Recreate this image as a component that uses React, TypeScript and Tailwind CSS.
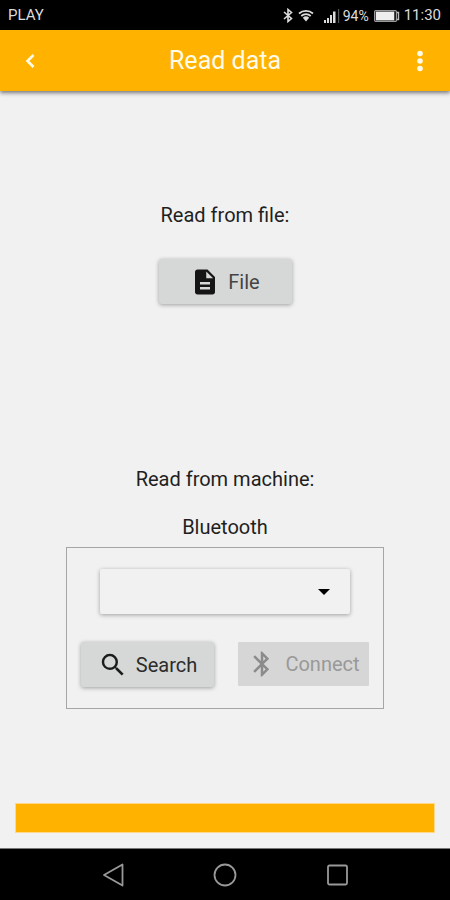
import React from "react";

function StatusBar() {
  return (
    <div className="flex h-[30px] items-center justify-between bg-black pt-px pr-[9px] pl-2 text-[15px] text-[#dcdcdc]">
      <span>PLAY</span>
      <div className="flex items-center">
        <svg className="h-[15px] w-[10px]" viewBox="0 0 10 15" fill="none" stroke="currentColor" strokeWidth="1.6">
          <path d="M1 4l7.5 6.5L5 13.5v-12l3.5 3L1 11" />
        </svg>
        <svg className="ml-[5px] h-[13px] w-4" viewBox="0 0 16 13" fill="none" stroke="currentColor" strokeWidth="1.7">
          <path d="M1 4.5a10.5 10.5 0 0 1 14 0M3.3 7a7 7 0 0 1 9.4 0" />
          <path d="M4.800 8.800a4.800 4.800 0 0 1 6.400 0L8 12.500z" fill="currentColor" stroke="none" />
        </svg>
        <svg className="ml-[10px] h-[14px] w-4" viewBox="0 0 16 14" fill="currentColor">
          <path d="M0 11h2v3H0zM3 9h2v5H3zM6 6h2v8H6zM9 2.500h2.500v11.500H9z" />
          <path d="M14 0h1.200v14H14z" opacity=".4" />
        </svg>
        <span className="ml-[3px] text-sm">94%</span>
        <svg className="ml-[5px] h-3 w-[26px]" viewBox="0 0 26 12">
          <rect x=".6" y=".6" width="21.800" height="10.800" rx="1" fill="none" stroke="#999" strokeWidth="1.200" />
          <rect x="1.800" y="1.600" width="18.500" height="8.800" fill="#eee" />
          <path d="M23 2.500h1.500v7H23" fill="none" stroke="#bbb" strokeWidth="1.400" />
        </svg>
        <span className="ml-1">11:30</span>
      </div>
    </div>
  );
}

function AppBar() {
  return (
    <header className="flex h-[61px] items-center justify-between bg-[#ffb300] text-[#fffbea] shadow-[0_2px_4px_rgba(0,0,0,0.5)]">
      <button type="button" aria-label="Back" className="flex h-full w-[60px] items-center justify-center">
        <svg className="h-4 w-3" viewBox="0 0 12 16" fill="none" stroke="currentColor" strokeWidth="2.600">
          <path d="M9.500 2l-6 6 6 6" />
        </svg>
      </button>
      <h1 className="text-[25px]">Read data</h1>
      <button type="button" aria-label="More options" className="flex h-full w-[60px] items-center justify-center">
        <svg className="h-[22px] w-2" viewBox="0 0 8 22" fill="currentColor">
          <circle cx="4" cy="3.500" r="2.800" />
          <circle cx="4" cy="11" r="2.800" />
          <circle cx="4" cy="18.500" r="2.800" />
        </svg>
      </button>
    </header>
  );
}

const raised =
  "flex h-[45px] items-center justify-center gap-2 rounded-[3px] bg-[#d6d8d7] text-xl shadow-[0_1px_4px_rgba(0,0,0,0.35)]";

function ReadFromFile() {
  return (
    <section className="flex flex-col items-center">
      <h2 className="text-xl leading-6">Read from file:</h2>
      <button type="button" className={`${raised} mt-8 w-[133px] text-[#444]`}>
        <svg className="size-[30px]" viewBox="0 0 24 24" fill="#151515">
          <path d="M14 2H6c-1.100 0-2 .9-2 2v16c0 1.100.9 2 2 2h12c1.100 0 2-.9 2-2V8l-6-6zm2 16H8v-2h8v2zm0-4H8v-2h8v2zm-3-5V3.500L18.500 9H13z" />
        </svg>
        File
      </button>
    </section>
  );
}

function ReadFromMachine() {
  return (
    <section className="flex flex-col items-center">
      <h2 className="text-xl leading-6">Read from machine:</h2>
      <label htmlFor="device" className="mt-6 text-xl leading-6">
        Bluetooth
      </label>
      <div className="mt-2 flex w-[318px] flex-col border border-[#a6a6a6] px-[14px] pt-[21px] pb-[21px]">
        <div className="relative mx-[19px]">
          <select
            id="device"
            className="block h-[45px] w-full appearance-none rounded-[2px] bg-[#f1f1f1] px-4 text-xl shadow-[0_1px_4px_rgba(0,0,0,0.35)]"
          >
            <option value=""></option>
          </select>
          <svg className="pointer-events-none absolute top-5 right-5 h-[6px] w-3" viewBox="0 0 12 6">
            <path d="M0 0h12L6 6z" fill="#000" />
          </svg>
        </div>
        <div className="mt-7 flex justify-between">
          <button type="button" className={`${raised} w-[133px] text-[#2c2c2c]`}>
            <svg className="size-[30px]" viewBox="0 0 24 24" fill="#1c1c1c">
              <path d="M15.500 14h-.79l-.28-.27A6.471 6.471 0 0 0 16 9.500 6.500 6.500 0 1 0 9.500 16c1.610 0 3.090-.59 4.230-1.570l.27.28v.79l5 4.990L20.490 19l-4.990-5zm-6 0C7.010 14 5 11.990 5 9.500S7.010 5 9.500 5 14 7.010 14 9.500 11.990 14 9.500 14z" />
            </svg>
            Search
          </button>
          <button
            type="button"
            disabled
            className="flex h-[44px] w-[131px] items-center justify-center gap-2 rounded-[1px] bg-[#d6d6d6] text-xl text-[#999]"
          >
            <svg className="size-[30px]" viewBox="0 0 24 24" fill="#8b8b8b">
              <path d="M17.710 7.710L12 2h-1v7.590L6.410 5 5 6.410 10.590 12 5 17.590 6.410 19 11 14.410V22h1l5.710-5.710-4.300-4.290 4.300-4.290zM13 5.830l1.880 1.880L13 9.590V5.830zm1.880 10.460L13 18.170v-3.760l1.880 1.880z" />
            </svg>
            Connect
          </button>
        </div>
      </div>
    </section>
  );
}

function NavigationBar() {
  return (
    <nav className="flex h-[52px] items-center justify-center gap-[88px] border-t border-[#777] bg-black text-[#999]">
      <button type="button" aria-label="System back">
        <svg className="block size-6" viewBox="0 0 24 24" fill="none" stroke="currentColor" strokeWidth="1.800" strokeLinejoin="round">
          <path d="M21.500 1.500v21L3 12z" />
        </svg>
      </button>
      <button type="button" aria-label="Home">
        <svg className="block size-6" viewBox="0 0 24 24" fill="none" stroke="currentColor" strokeWidth="1.800">
          <circle cx="12" cy="12" r="10.500" />
        </svg>
      </button>
      <button type="button" aria-label="Recent apps">
        <svg className="block size-6" viewBox="0 0 24 24" fill="none" stroke="currentColor" strokeWidth="1.800">
          <rect x="3" y="2.500" width="19" height="19" rx="1.500" />
        </svg>
      </button>
    </nav>
  );
}

export default function App() {
  return (
    <div className="flex min-h-screen flex-col bg-[#f1f1f1] font-['Roboto',sans-serif] text-[#1f1f1f]">
      <StatusBar />
      <AppBar />
      <main className="flex flex-1 flex-col px-[15px] pt-[112px] pb-[15px]">
        <ReadFromFile />
        <div className="mt-[163px]">
          <ReadFromMachine />
        </div>
        <div className="mt-auto h-[30px] border border-[#ffd98a] bg-[#ffb300]" />
      </main>
      <NavigationBar />
    </div>
  );
}
